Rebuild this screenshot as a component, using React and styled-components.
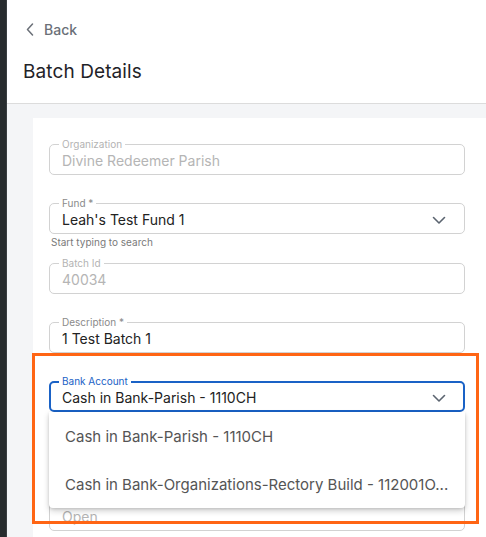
import React from "react";
import styled, { createGlobalStyle } from "styled-components";

const Global = createGlobalStyle`
  html, body { margin: 0; padding: 0; height: 100%; overflow: hidden; }
  body { font-family: Inter, "Noto Sans", sans-serif; background: #272c2e; }
  #root { height: 100%; }
`;

const Page = styled.div`
  display: flex;
  height: 537px;
  width: 486px;
  overflow: hidden;
`;

const Backdrop = styled.div`
  width: 6px;
  flex: none;
  background: #272c2e;
  border-right: 1px solid #3a3f42;
`;

const Drawer = styled.div`
  flex: 1;
  display: flex;
  flex-direction: column;
  background: #f4f5f7;
  min-width: 0;
`;

const Header = styled.header`
  background: #fff;
  border-bottom: 1px solid #dcdcdc;
  height: 104px;
  box-sizing: border-box;
  padding: 17px 0 0 16px;
  flex: none;
`;

const BackLink = styled.div`
  display: flex;
  align-items: center;
  gap: 10px;
  color: #6b7078;
  font-size: 14px;
  font-weight: 500;
  height: 24px;
  padding-left: 3px;
`;

const Title = styled.h1`
  margin: 19px 0 0 0;
  font-size: 19px;
  font-weight: 400;
  color: #1f2328;
  letter-spacing: 0.1px;
`;

const Body = styled.div`
  flex: 1;
  padding: 14px 0 0 26px;
  position: relative;
`;

const Card = styled.div`
  background: #fff;
  height: 100%;
  padding: 26px 21px 0 16px;
  box-sizing: border-box;
  display: flex;
  flex-direction: column;
`;

const Group = styled.div`
  height: 59.25px;
  flex: none;
  position: relative;
`;

const FieldBox = styled.div`
  position: relative;
  height: 31px;
  box-sizing: border-box;
  border: ${(p) => (p.$focused ? "2px solid #1a62c6" : "1px solid #d2d2d2")};
  border-radius: 5px;
  display: flex;
  align-items: center;
  padding: 0 ${(p) => (p.$focused ? "11px" : "12px")};
  padding-top: 2px;
`;

const Label = styled.span`
  position: absolute;
  top: ${(p) => (p.$focused ? "-8px" : "-7px")};
  left: ${(p) => (p.$focused ? "8px" : "9px")};
  padding: 0 3px;
  background: #fff;
  font-size: 10px;
  line-height: 12px;
  color: ${(p) => (p.$focused ? "#1a62c6" : p.$disabled ? "#b3b3b3" : "#8a8a8a")};
`;

const Value = styled.span`
  flex: 1;
  font-size: 14px;
  color: ${(p) => (p.$disabled ? "#b5b5b5" : "#222")};
  white-space: nowrap;
  overflow: hidden;
`;

const Helper = styled.div`
  font-size: 10px;
  color: #7a7a7a;
  margin: 2px 0 0 2px;
`;

const Chevron = styled.svg`
  width: 14px;
  height: 14px;
  flex: none;
  margin-right: 6px;
`;

const Menu = styled.ul`
  position: absolute;
  top: 31px;
  left: 0;
  right: 0;
  margin: 0;
  padding: 0;
  list-style: none;
  background: #fff;
  border-radius: 0 0 4px 4px;
  box-shadow: 0 3px 6px rgba(0, 0, 0, 0.18), 0 1px 3px rgba(0, 0, 0, 0.12);
  z-index: 2;
`;

const MenuItem = styled.li`
  height: 48px;
  display: flex;
  align-items: center;
  padding: 0 16px;
  font-size: 15px;
  color: #555;
  white-space: nowrap;
  overflow: hidden;
`;

const Highlight = styled.div`
  position: absolute;
  left: 25px;
  top: 249px;
  width: 447px;
  height: 171px;
  box-sizing: border-box;
  border: 3px solid #ff6514;
  pointer-events: none;
  z-index: 3;
`;

const ChevronDown = () => (
  <Chevron viewBox="0 0 14 14" fill="none">
    <path d="M1.5 4.5 L7 10 L12.5 4.5" stroke="#5b6470" strokeWidth="1.6" strokeLinecap="round" strokeLinejoin="round" />
  </Chevron>
);

const Field = ({ label, value, disabled, focused, select, helper, children }) => (
  <Group>
    <FieldBox $focused={focused}>
      {label && <Label $disabled={disabled} $focused={focused}>{label}</Label>}
      <Value $disabled={disabled}>{value}</Value>
      {select && <ChevronDown />}
    </FieldBox>
    {helper && <Helper>{helper}</Helper>}
    {children}
  </Group>
);

export default function App() {
  return (
    <>
      <Global />
      <Page>
        <Backdrop />
        <Drawer>
          <Header>
            <BackLink>
              <svg width="8" height="13" viewBox="0 0 8 13" fill="none">
                <path d="M6.5 1 L1.5 6.5 L6.5 12" stroke="#6b7078" strokeWidth="1.5" strokeLinecap="round" strokeLinejoin="round" />
              </svg>
              Back
            </BackLink>
            <Title>Batch Details</Title>
          </Header>
          <Body>
            <Card>
              <Field label="Organization" value="Divine Redeemer Parish" disabled />
              <Field label="Fund *" value="Leah's Test Fund 1" select helper="Start typing to search" />
              <Field label="Batch Id" value="40034" disabled />
              <Field label="Description *" value="1 Test Batch 1" />
              <Field label="Bank Account" value="Cash in Bank-Parish - 1110CH" select focused>
                <Menu>
                  <MenuItem>Cash in Bank-Parish - 1110CH</MenuItem>
                  <MenuItem>Cash in Bank-Organizations-Rectory Build - 112001O...</MenuItem>
                </Menu>
              </Field>
              <Field value="" disabled />
              <Field value="Open" disabled />
            </Card>
            <Highlight />
          </Body>
        </Drawer>
      </Page>
    </>
  );
}
